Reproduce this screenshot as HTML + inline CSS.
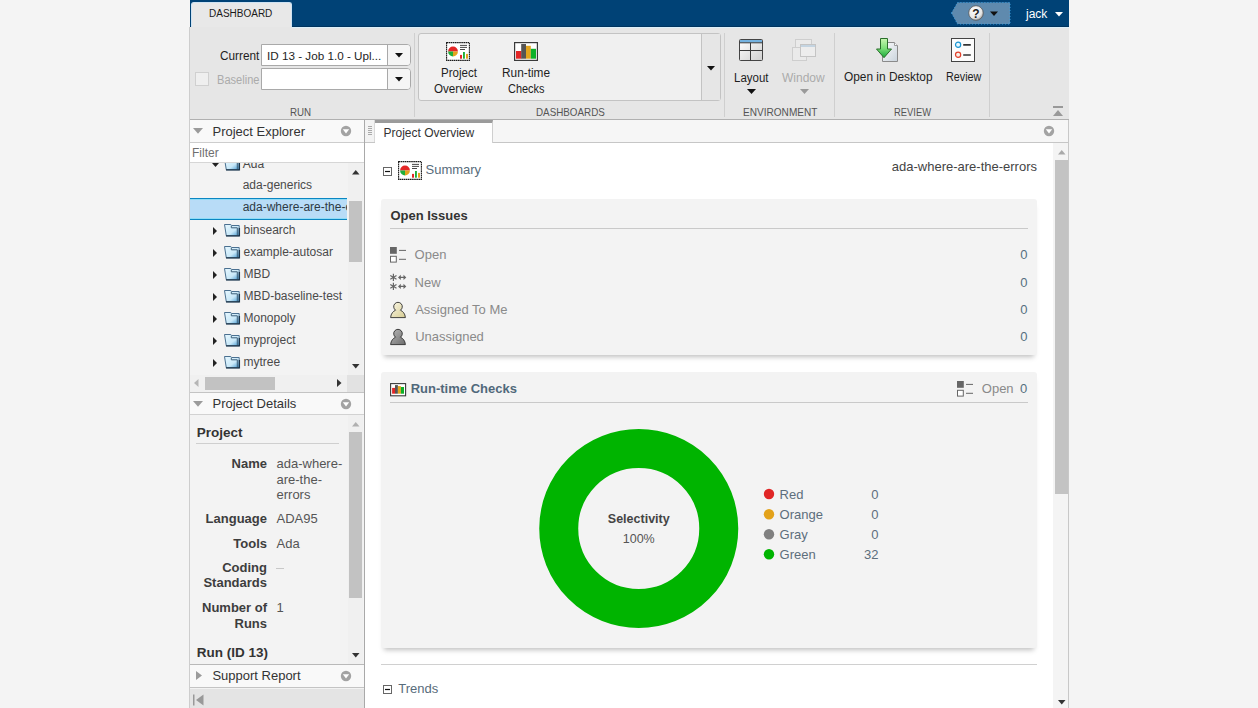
<!DOCTYPE html>
<html><head><meta charset="utf-8">
<style>
*{margin:0;padding:0;box-sizing:border-box}
html,body{width:1258px;height:708px;overflow:hidden;background:#f4f4f4;font-family:"Liberation Sans",sans-serif;position:relative}
.a{position:absolute}
.t{position:absolute;white-space:nowrap;line-height:1}
svg{position:absolute;overflow:visible}
</style></head><body>

<!-- ===== top bar ===== -->
<div class="a" style="left:190px;top:0;width:879px;height:27px;background:#004276;border-bottom:1px solid #00345f"></div>
<div class="a" style="left:191px;top:2px;width:101px;height:26px;background:#e8e8e8;border:1px solid #cfe3f3;border-bottom:none;border-radius:3px 3px 0 0"></div>
<div class="t" style="left:209px;top:8.5px;font-size:10px;color:#1a1a1a">DASHBOARD</div>

<!-- help badge -->
<svg style="left:950px;top:2px" width="62" height="23"><path d="M1.5 11 L7.5 0.5 H60 V22 H7.5 Z" fill="#5f8aae" stroke="#3fa0e0" stroke-width="1" stroke-dasharray="1 2"/>
<defs><radialGradient id="hg" cx="0.4" cy="0.35" r="0.7"><stop offset="0" stop-color="#fff"/><stop offset="0.7" stop-color="#e6e6e6"/><stop offset="1" stop-color="#9a9a9a"/></radialGradient></defs>
<circle cx="26" cy="11" r="7.3" fill="url(#hg)" stroke="#555" stroke-width="0.8"/>
<text x="26" y="15.5" text-anchor="middle" font-family="Liberation Sans" font-weight="bold" font-size="12" fill="#222">?</text>
<path d="M40 9.5 h8 l-4 4.5 z" fill="#111"/></svg>
<div class="t" style="left:1026px;top:8px;font-size:12px;color:#fff">jack</div>
<svg style="left:1055px;top:12px" width="9" height="6"><path d="M0 0 h8 l-4 4.5 z" fill="#fff"/></svg>

<!-- ===== toolstrip ===== -->
<div class="a" style="left:190px;top:27px;width:879px;height:93px;background:#e6e6e6;border-bottom:1px solid #b0b0b0"></div>
<div class="a" style="left:292px;top:27px;width:777px;height:1px;background:#dcf0fb"></div>

<!-- RUN section -->
<div class="t" style="left:219.7px;top:49.8px;font-size:12px;color:#1e1e1e;transform:scaleX(0.983);transform-origin:0 0">Current</div>
<div class="a" style="left:261px;top:44px;width:150px;height:22px;background:#fff;border:1px solid #a9a9a9;border-radius:0 4px 4px 0"></div>
<div class="a" style="left:387px;top:45px;width:23px;height:20px;background:#f5f5f5;border-left:1px solid #a9a9a9;border-radius:0 3px 3px 0"></div>
<div class="t" style="left:267px;top:50px;font-size:11.7px;color:#1e1e1e">ID 13 - Job 1.0 - Upl...</div>
<svg style="left:395px;top:53px" width="10" height="6"><path d="M0 0 h8 l-4 4.5 z" fill="#111"/></svg>
<div class="a" style="left:195px;top:72px;width:14px;height:14px;background:#efefef;border:1px solid #d0d0d0"></div>
<div class="t" style="left:216.6px;top:74px;font-size:12px;color:#ababab;transform:scaleX(0.922);transform-origin:0 0">Baseline</div>
<div class="a" style="left:261px;top:68px;width:150px;height:22px;background:#fff;border:1px solid #a9a9a9;border-radius:0 4px 4px 0"></div>
<div class="a" style="left:387px;top:69px;width:23px;height:20px;background:#f5f5f5;border-left:1px solid #a9a9a9;border-radius:0 3px 3px 0"></div>
<svg style="left:395px;top:77px" width="10" height="6"><path d="M0 0 h8 l-4 4.5 z" fill="#111"/></svg>
<div class="t" style="left:290.4px;top:107.3px;font-size:10.5px;color:#555;transform:scaleX(0.930);transform-origin:0 0">RUN</div>
<div class="a" style="left:414px;top:33px;width:1px;height:84px;background:#cfcfcf"></div>

<!-- DASHBOARDS section -->
<div class="a" style="left:418px;top:33px;width:303px;height:68px;background:#f0f0f0;border:1px solid #c3c3c3;border-radius:3px"></div>
<div class="a" style="left:701px;top:34px;width:19px;height:66px;background:#e6e6e6;border-left:1px solid #c3c3c3"></div>
<svg style="left:707px;top:65.5px" width="10" height="6"><path d="M0 0 h8 l-4 4.5 z" fill="#111"/></svg>
<!-- project overview icon -->
<svg id="ico-po" style="left:446px;top:42px" width="24" height="19">
<rect x="0.6" y="0.6" width="22.8" height="17.8" fill="#fff" stroke="#1a1a1a" stroke-width="1.1" stroke-dasharray="1.6 0.5"/>
<path d="M2.1 9.5 A4.9 4.9 0 0 1 11.9 9.5 Z" fill="#e32626"/>
<path d="M2.1 9.5 A4.9 4.9 0 0 0 7 14.4 V9.5 Z" fill="#1fae3a"/>
<path d="M7 14.4 A4.9 4.9 0 0 0 11.9 9.5 H7 Z" fill="#e2a51e"/>
<path d="M14 3.4h7M14 5.4h7M14 7.5h5" stroke="#333" stroke-width="0.9"/>
<rect x="14" y="12.9" width="2" height="3.8" fill="#e32626"/><rect x="17" y="10" width="1.9" height="6.7" fill="#1fae3a"/><rect x="20" y="11.9" width="2" height="4.8" fill="#e2a51e"/>
</svg>
<div class="t" style="left:440.5px;top:67.3px;font-size:12px;color:#1e1e1e;transform:scaleX(0.960);transform-origin:0 0">Project</div>
<div class="t" style="left:434px;top:83px;font-size:12px;color:#1e1e1e;transform:scaleX(0.968);transform-origin:0 0">Overview</div>
<!-- run-time checks icon -->
<svg style="left:514px;top:42px" width="24" height="19">
<rect x="0.6" y="0.6" width="22.8" height="17.8" fill="#fff" stroke="#3a3a3a" stroke-width="1.2"/>
<rect x="2" y="9" width="5.5" height="7.7" fill="#e32626"/>
<rect x="7.2" y="2" width="4.8" height="14.7" fill="#555"/>
<rect x="12" y="3.8" width="4.8" height="12.9" fill="#e2a51e"/>
<rect x="16.8" y="6.8" width="5.2" height="9.9" fill="#0cb12a"/>
</svg>
<div class="t" style="left:502px;top:67.3px;font-size:12px;color:#1e1e1e;transform:scaleX(0.986);transform-origin:0 0">Run-time</div>
<div class="t" style="left:508.3px;top:83px;font-size:12px;color:#1e1e1e;transform:scaleX(0.912);transform-origin:0 0">Checks</div>
<div class="t" style="left:535.5px;top:107.3px;font-size:10.5px;color:#555;transform:scaleX(0.936);transform-origin:0 0">DASHBOARDS</div>
<div class="a" style="left:724px;top:33px;width:1px;height:84px;background:#cfcfcf"></div>

<!-- ENVIRONMENT section -->
<svg style="left:739px;top:39px" width="24" height="22">
<defs><linearGradient id="lg" x1="0" y1="0" x2="1" y2="1"><stop offset="0" stop-color="#fff"/><stop offset="1" stop-color="#d0d0d0"/></linearGradient></defs>
<rect x="0.5" y="0.5" width="23" height="21" rx="1" fill="url(#lg)" stroke="#444"/>
<rect x="1" y="1" width="22" height="2.6" fill="#74b2e0"/>
<path d="M0.5 3.8h23M11.5 3.8v17.7M0.5 11.5h23" stroke="#3a3a3a" stroke-width="1"/>
</svg>
<div class="t" style="left:734px;top:71.6px;font-size:12px;color:#1e1e1e;transform:scaleX(0.958);transform-origin:0 0">Layout</div>
<svg style="left:747px;top:89px" width="10" height="6"><path d="M0 0 h9 l-4.5 5 z" fill="#111"/></svg>
<svg style="left:792px;top:38px" width="25" height="24" opacity="0.55">
<rect x="3.5" y="1.5" width="16" height="12" fill="#eee" stroke="#bbb"/>
<rect x="0.5" y="9.5" width="14" height="13" fill="#eee" stroke="#bbb"/>
<rect x="8.5" y="6.5" width="15" height="12" fill="#f4f4f4" stroke="#aaa"/>
<rect x="9" y="7" width="14" height="2" fill="#a9c6de"/>
</svg>
<div class="t" style="left:782px;top:71.6px;font-size:12px;color:#ababab">Window</div>
<svg style="left:800px;top:89px" width="10" height="6"><path d="M0 0 h9 l-4.5 5 z" fill="#9a9a9a"/></svg>
<div class="t" style="left:742.6px;top:107.3px;font-size:10.5px;color:#555;transform:scaleX(0.959);transform-origin:0 0">ENVIRONMENT</div>
<div class="a" style="left:834px;top:33px;width:1px;height:84px;background:#cfcfcf"></div>

<!-- REVIEW section -->
<svg style="left:876px;top:37px" width="24" height="26">
<defs><linearGradient id="dg" x1="0" y1="0" x2="1" y2="1"><stop offset="0" stop-color="#fdfdfd"/><stop offset="1" stop-color="#c9d3dc"/></linearGradient>
<linearGradient id="ag" x1="0" y1="0" x2="0" y2="1"><stop offset="0" stop-color="#c8f5b0"/><stop offset="0.5" stop-color="#7ee07a"/><stop offset="1" stop-color="#16a83a"/></linearGradient></defs>
<path d="M6.5 5.5 H18.5 L21.5 8.5 V24.5 H6.5 Z" fill="url(#dg)" stroke="#8a8a8a"/>
<path d="M18.5 5.5 V8.5 H21.5" fill="#fff" stroke="#9a9a9a"/>
<path d="M4.5 1.5 H11.5 V12 H15.5 L8 20.7 L0.5 12 H4.5 Z" fill="url(#ag)" stroke="#2a6e2a" stroke-width="1"/>
</svg>
<div class="t" style="left:844px;top:71.3px;font-size:12px;color:#1e1e1e;transform:scaleX(0.990);transform-origin:0 0">Open in Desktop</div>
<svg style="left:951px;top:38px" width="24" height="24">
<rect x="0.5" y="0.5" width="23" height="23" fill="#fcfcfc" stroke="#444"/>
<circle cx="7.1" cy="6.8" r="2.6" fill="#e8f8ff" stroke="#1b95d2" stroke-width="1.2"/>
<circle cx="7.1" cy="16.8" r="2.6" fill="#f8f0ea" stroke="#e2402a" stroke-width="1.2"/>
<path d="M12.2 6.9h7.6M12.2 17h7.6" stroke="#333" stroke-width="1.7"/>
</svg>
<div class="t" style="left:945.6px;top:71.3px;font-size:12px;color:#1e1e1e;transform:scaleX(0.898);transform-origin:0 0">Review</div>
<div class="t" style="left:894px;top:107.3px;font-size:10.5px;color:#555;transform:scaleX(0.894);transform-origin:0 0">REVIEW</div>
<div class="a" style="left:989px;top:33px;width:1px;height:84px;background:#cfcfcf"></div>
<svg style="left:1053px;top:106px" width="11" height="10"><rect x="0" y="0" width="10" height="2" fill="#999"/><path d="M0 10 L5 4 L10 10 Z" fill="#999"/></svg>

<svg width="0" height="0" style="position:absolute"><defs>
<linearGradient id="fg" x1="0" y1="0" x2="1" y2="1"><stop offset="0" stop-color="#e8f8ff"/><stop offset="0.6" stop-color="#c9e8f8"/><stop offset="1" stop-color="#3d95d0"/></linearGradient>
<symbol id="folder" viewBox="0 0 17 14"><path d="M0.5 1.5 H6.8 L7.8 2.5 H15.2 V12.8 H2.3 Z" fill="url(#fg)" stroke="#4a7090" stroke-width="1"/><path d="M7.3 2.5 V4.8 H13.3 V12.5" fill="none" stroke="#3d5f78" stroke-width="1"/><path d="M2 12.9 H15.4 V5" fill="none" stroke="#1b3347" stroke-width="1.3"/></symbol>
</defs></svg>

<!-- ===== MAIN CONTENT ===== -->
<div class="a" style="left:365px;top:120px;width:704px;height:588px;background:#fff;border-right:1px solid #c8c8c8"></div>
<!-- tab strip -->
<div class="a" style="left:365px;top:120px;width:703px;height:23px;background:#f6f6f6;border-bottom:1px solid #c6c6c6"></div>
<div class="a" style="left:365px;top:120px;width:10px;height:22px;background:#f3f3f3;border-right:1px solid #d9d9d9"></div>
<svg style="left:368px;top:126px" width="5" height="10"><path d="M0 0.5h4M0 2.5h4M0 4.5h4M0 6.5h4M0 8.5h4" stroke="#aaa" stroke-width="1"/></svg>
<div class="a" style="left:375px;top:120px;width:118px;height:23px;background:#fff;border-top:3px solid #9b9b9b;border-right:1px solid #cfcfcf"></div>
<div class="t" style="left:383.5px;top:127.3px;font-size:12px;color:#333">Project Overview</div>
<svg style="left:1043px;top:125px" width="12" height="12"><circle cx="6" cy="6" r="5.2" fill="#a3a3a3"/><path d="M2.8 4.3 h6.4 l-3.2 4.2 z" fill="#fff"/></svg>
<!-- right scrollbar -->
<div class="a" style="left:1053px;top:143px;width:15px;height:565px;background:#f4f4f4"></div>
<svg style="left:1058px;top:150px" width="8" height="5"><path d="M0 4.5 h7.5 l-3.75 -4.5 z" fill="#a9a9a9"/></svg>
<div class="a" style="left:1055px;top:160px;width:13px;height:334px;background:#c3c3c3"></div>
<svg style="left:1058px;top:700px" width="8" height="5"><path d="M0 0 h7.5 l-3.75 4.5 z" fill="#333"/></svg>

<!-- Summary -->
<svg style="left:383px;top:167px" width="10" height="10"><rect x="0.5" y="0.5" width="8" height="8" fill="#fff" stroke="#666"/><path d="M2 4.5h5" stroke="#111" stroke-width="1.2"/></svg>
<svg style="left:398px;top:161px" width="25" height="19">
<rect x="0.6" y="0.6" width="22.8" height="17.8" fill="#fff" stroke="#1a1a1a" stroke-width="1.1" stroke-dasharray="1.6 0.5"/>
<path d="M2.1 9.5 A4.9 4.9 0 0 1 11.9 9.5 Z" fill="#e32626"/>
<path d="M2.1 9.5 A4.9 4.9 0 0 0 7 14.4 V9.5 Z" fill="#1fae3a"/>
<path d="M7 14.4 A4.9 4.9 0 0 0 11.9 9.5 H7 Z" fill="#e2a51e"/>
<path d="M14 3.4h7M14 5.4h7M14 7.5h5" stroke="#333" stroke-width="0.9"/>
<rect x="14" y="12.9" width="2" height="3.8" fill="#e32626"/><rect x="17" y="10" width="1.9" height="6.7" fill="#1fae3a"/><rect x="20" y="11.9" width="2" height="4.8" fill="#e2a51e"/>
</svg>
<div class="t" style="left:425.5px;top:162.7px;font-size:13px;color:#586c7b">Summary</div>
<div class="t" style="right:221px;top:160.1px;font-size:13px;color:#444">ada-where-are-the-errors</div>

<!-- Open Issues card -->
<div class="a" style="left:381px;top:199px;width:656px;height:156px;background:#f3f3f3;border-radius:3px;box-shadow:0 5px 5px -3px rgba(0,0,0,0.25)"></div>
<div class="t" style="left:390.4px;top:208.8px;font-size:13px;font-weight:bold;color:#333">Open Issues</div>
<div class="a" style="left:390px;top:228px;width:638px;height:1px;background:#c9c9c9"></div>
<svg style="left:390px;top:247px" width="17" height="17"><rect x="0" y="0" width="6.8" height="6.8" fill="#666"/><rect x="0.5" y="9.3" width="5.8" height="5.8" fill="#fff" stroke="#666" stroke-width="1"/><path d="M9 3.4h7M9 12.3h7" stroke="#666" stroke-width="1"/></svg>
<div class="t" style="left:414.6px;top:247.7px;font-size:13px;color:#8a8a8a">Open</div>
<div class="t" style="right:230.5px;top:247.7px;font-size:13px;color:#55707f">0</div>
<svg style="left:390px;top:273px" width="17" height="18">
<g stroke="#666" stroke-width="1.2" fill="none"><path d="M3.4 0.8v7.2M0.3 2.6l6.2 3.6M0.3 6.2l6.2-3.6"/><path d="M3.4 9.8v7.2M0.3 11.6l6.2 3.6M0.3 15.2l6.2-3.6"/>
<path d="M10 4.4h5M10 13.4h5"/></g><path d="M8 4.4l2.8-2.6v5.2zM16.3 4.4l-2.8-2.6v5.2zM8 13.4l2.8-2.6v5.2zM16.3 13.4l-2.8-2.6v5.2z" fill="#666"/></svg>
<div class="t" style="left:414.6px;top:275.9px;font-size:13px;color:#8a8a8a">New</div>
<div class="t" style="right:230.5px;top:275.9px;font-size:13px;color:#55707f">0</div>
<svg style="left:390px;top:301px" width="17" height="18"><defs><linearGradient id="py" x1="0" y1="0" x2="1" y2="1"><stop offset="0" stop-color="#fbf8e8"/><stop offset="1" stop-color="#d6cc92"/></linearGradient></defs>
<path d="M0.6 16.6 C0.9 12.6 3.2 10.2 5.6 9.2 A4.3 4.3 0 1 1 10.4 9.2 C12.8 10.2 15.1 12.6 15.4 16.6 Z" fill="url(#py)" stroke="#2e2e2e" stroke-width="0.9"/></svg>
<div class="t" style="left:415.2px;top:302.6px;font-size:13px;color:#8a8a8a">Assigned To Me</div>
<div class="t" style="right:230.5px;top:302.6px;font-size:13px;color:#55707f">0</div>
<svg style="left:390px;top:328px" width="17" height="18"><defs><linearGradient id="pg" x1="0" y1="0" x2="1" y2="1"><stop offset="0" stop-color="#b8b8b8"/><stop offset="1" stop-color="#6d6d6d"/></linearGradient></defs>
<path d="M0.6 16.6 C0.9 12.6 3.2 10.2 5.6 9.2 A4.3 4.3 0 1 1 10.4 9.2 C12.8 10.2 15.1 12.6 15.4 16.6 Z" fill="url(#pg)" stroke="#2e2e2e" stroke-width="0.9"/></svg>
<div class="t" style="left:415.2px;top:330.3px;font-size:13px;color:#8a8a8a">Unassigned</div>
<div class="t" style="right:230.5px;top:330.3px;font-size:13px;color:#55707f">0</div>

<!-- Run-time checks card -->
<div class="a" style="left:381px;top:372px;width:656px;height:276px;background:#f3f3f3;border-radius:3px;box-shadow:0 5px 5px -3px rgba(0,0,0,0.25)"></div>
<svg style="left:390px;top:383px" width="17" height="14">
<rect x="0.6" y="0.6" width="15" height="12.2" fill="#fff" stroke="#3a3a3a" stroke-width="1.1"/>
<rect x="2.1" y="4.9" width="2.9" height="5.8" fill="#e32626"/><rect x="5" y="2.1" width="2.9" height="8.6" fill="#555"/><rect x="7.9" y="3.1" width="3" height="7.6" fill="#e2a51e"/><rect x="10.9" y="4" width="3.1" height="6.7" fill="#0cb12a"/>
</svg>
<div class="t" style="left:410.7px;top:381.8px;font-size:13px;font-weight:bold;color:#50687a">Run-time Checks</div>
<svg style="left:957px;top:381px" width="17" height="17"><rect x="0" y="0" width="6.8" height="6.8" fill="#666"/><rect x="0.5" y="9.3" width="5.8" height="5.8" fill="#fff" stroke="#666" stroke-width="1"/><path d="M9 3.4h7M9 12.3h7" stroke="#666" stroke-width="1"/></svg>
<div class="t" style="left:981.8px;top:381.7px;font-size:13px;color:#8a8a8a">Open</div>
<div class="t" style="right:230.7px;top:381.7px;font-size:13px;color:#55707f">0</div>
<div class="a" style="left:390px;top:402px;width:638px;height:1px;background:#c9c9c9"></div>
<svg style="left:538px;top:428px" width="202" height="202"><circle cx="100.75" cy="100.5" r="80" fill="none" stroke="#00b400" stroke-width="39"/></svg>
<div class="t" style="left:588.75px;width:100px;text-align:center;top:512.9px;font-size:12.5px;font-weight:bold;color:#444">Selectivity</div>
<div class="t" style="left:588.75px;width:100px;text-align:center;top:532.6px;font-size:12.5px;color:#555">100%</div>
<svg style="left:763px;top:488px" width="12" height="72">
<circle cx="6" cy="6" r="5.2" fill="#e02626"/><circle cx="6" cy="26.2" r="5.2" fill="#e3a21a"/><circle cx="6" cy="46.2" r="5.2" fill="#808080"/><circle cx="6" cy="66.2" r="5.2" fill="#00b400"/></svg>
<div class="t" style="left:779.6px;top:487.6px;font-size:13px;color:#5d6e7c">Red</div>
<div class="t" style="left:779.6px;top:508px;font-size:13px;color:#5d6e7c">Orange</div>
<div class="t" style="left:779.6px;top:527.8px;font-size:13px;color:#5d6e7c">Gray</div>
<div class="t" style="left:779.6px;top:547.6px;font-size:13px;color:#5d6e7c">Green</div>
<div class="t" style="right:379.5px;top:487.6px;font-size:13px;color:#5d6e7c">0</div>
<div class="t" style="right:379.5px;top:508px;font-size:13px;color:#5d6e7c">0</div>
<div class="t" style="right:379.5px;top:527.8px;font-size:13px;color:#5d6e7c">0</div>
<div class="t" style="right:379.5px;top:547.6px;font-size:13px;color:#5d6e7c">32</div>

<div class="a" style="left:381px;top:664px;width:656px;height:1px;background:#d0d0d0"></div>
<svg style="left:383px;top:685px" width="10" height="10"><rect x="0.5" y="0.5" width="8" height="8" fill="#fff" stroke="#666"/><path d="M2 4.5h5" stroke="#111" stroke-width="1.2"/></svg>
<div class="t" style="left:398.2px;top:681.9px;font-size:13px;color:#586c7b">Trends</div>

<!-- ===== LEFT PANELS ===== -->
<div class="a" style="left:190px;top:120px;width:175px;height:588px;background:#f3f3f3;border-right:1px solid #a9a9a9"></div>
<div class="a" style="left:189px;top:27px;width:1px;height:681px;background:#cdcdcd"></div>
<!-- Project Explorer header -->
<div class="a" style="left:190px;top:120px;width:174px;height:23px;background:#f9f9f9;border-bottom:1px solid #cdcdcd"></div>
<svg style="left:193px;top:128px" width="11" height="7"><path d="M0 0 h10 l-5 5.8 z" fill="#9b9b9b"/></svg>
<div class="t" style="left:212.5px;top:124.5px;font-size:13px;color:#333">Project Explorer</div>
<svg style="left:340px;top:125px" width="12" height="12"><circle cx="6" cy="6" r="5.2" fill="#a3a3a3"/><path d="M2.8 4.3 h6.4 l-3.2 4.2 z" fill="#fff"/></svg>
<!-- filter -->
<div class="a" style="left:190px;top:143px;width:174px;height:20px;background:#fff;border-bottom:1px solid #d6d6d6"></div>
<div class="t" style="left:192px;top:147px;font-size:12px;color:#6f6f6f">Filter</div>
<!-- tree -->
<div class="a" style="left:190px;top:163px;width:174px;height:212px;overflow:hidden">
  <svg style="left:21.7px;top:0px" width="8" height="6"><path d="M0 0 h7 l-3.5 4 z" fill="#222"/></svg>
  <svg style="left:34.0px;top:-6.0px" width="17" height="14"><use href="#folder"/></svg>
  <div class="t" style="left:52.8px;top:-4.8px;font-size:12px;color:#4a4a4a">Ada</div>
  <div class="t" style="left:52.7px;top:16.2px;font-size:12px;color:#4a4a4a">ada-generics</div>
  <div class="a" style="left:0;top:35px;width:157px;height:22px;background:#b8dcf7;border-top:1px solid #0b86c2;border-bottom:1px solid #0b86c2;box-shadow:inset 0 1px 0 #8fdcf7,inset 0 -1px 0 #8fdcf7;overflow:hidden">
    <div class="t" style="left:52.7px;top:1.5px;font-size:12px;color:#2e3a44">ada-where-are-the-errors</div>
  </div>
  <svg style="left:23.0px;top:63.7px" width="5" height="9"><path d="M0 0 v8 l4 -4 z" fill="#222"/></svg>
  <svg style="left:34.0px;top:59.5px" width="17" height="14"><use href="#folder"/></svg>
  <div class="t" style="left:53.5px;top:60.7px;font-size:12px;color:#4a4a4a">binsearch</div>
  <svg style="left:23.0px;top:85.7px" width="5" height="9"><path d="M0 0 v8 l4 -4 z" fill="#222"/></svg>
  <svg style="left:34.0px;top:81.5px" width="17" height="14"><use href="#folder"/></svg>
  <div class="t" style="left:53.5px;top:82.7px;font-size:12px;color:#4a4a4a">example-autosar</div>
  <svg style="left:23.0px;top:107.7px" width="5" height="9"><path d="M0 0 v8 l4 -4 z" fill="#222"/></svg>
  <svg style="left:34.0px;top:103.5px" width="17" height="14"><use href="#folder"/></svg>
  <div class="t" style="left:53.5px;top:104.7px;font-size:12px;color:#4a4a4a">MBD</div>
  <svg style="left:23.0px;top:129.7px" width="5" height="9"><path d="M0 0 v8 l4 -4 z" fill="#222"/></svg>
  <svg style="left:34.0px;top:125.5px" width="17" height="14"><use href="#folder"/></svg>
  <div class="t" style="left:53.5px;top:126.7px;font-size:12px;color:#4a4a4a">MBD-baseline-test</div>
  <svg style="left:23.0px;top:151.7px" width="5" height="9"><path d="M0 0 v8 l4 -4 z" fill="#222"/></svg>
  <svg style="left:34.0px;top:147.5px" width="17" height="14"><use href="#folder"/></svg>
  <div class="t" style="left:53.5px;top:148.7px;font-size:12px;color:#4a4a4a">Monopoly</div>
  <svg style="left:23.0px;top:173.7px" width="5" height="9"><path d="M0 0 v8 l4 -4 z" fill="#222"/></svg>
  <svg style="left:34.0px;top:169.5px" width="17" height="14"><use href="#folder"/></svg>
  <div class="t" style="left:53.5px;top:170.7px;font-size:12px;color:#4a4a4a">myproject</div>
  <svg style="left:23.0px;top:195.7px" width="5" height="9"><path d="M0 0 v8 l4 -4 z" fill="#222"/></svg>
  <svg style="left:34.0px;top:191.5px" width="17" height="14"><use href="#folder"/></svg>
  <div class="t" style="left:53.5px;top:192.7px;font-size:12px;color:#4a4a4a">mytree</div>
  <!-- vscroll -->
  <div class="a" style="left:158.0px;top:0;width:15px;height:212px;background:#f0f0f0"></div>
  <svg style="left:162.0px;top:7px" width="8" height="5"><path d="M0 4.5 h7.5 l-3.75 -4.5 z" fill="#333"/></svg>
  <div class="a" style="left:159.0px;top:38px;width:13px;height:61px;background:#c2c2c2"></div>
  <svg style="left:162.0px;top:201px" width="8" height="5"><path d="M0 0 h7.5 l-3.75 4.5 z" fill="#333"/></svg>
</div>
<!-- hscroll -->
<div class="a" style="left:190px;top:375px;width:174px;height:18px;background:#f0f0f0;border-bottom:1px solid #c4c4c4"></div>
<div class="a" style="left:205px;top:377px;width:70px;height:13px;background:#c2c2c2"></div>
<svg style="left:194px;top:379px" width="5" height="9"><path d="M4.5 0 v8 l-4.5 -4 z" fill="#b5b5b5"/></svg>
<svg style="left:337px;top:379px" width="5" height="9"><path d="M0 0 v8 l4.5 -4 z" fill="#333"/></svg>
<div class="a" style="left:347px;top:375px;width:17px;height:17px;background:#e2e2e2"></div>
<!-- Project Details header -->
<div class="a" style="left:190px;top:393px;width:174px;height:22px;background:#f9f9f9;border-bottom:1px solid #d2d2d2"></div>
<svg style="left:193px;top:401px" width="11" height="7"><path d="M0 0 h10 l-5 5.8 z" fill="#9b9b9b"/></svg>
<div class="t" style="left:212.5px;top:397.1px;font-size:13px;color:#333">Project Details</div>
<svg style="left:340px;top:398px" width="12" height="12"><circle cx="6" cy="6" r="5.2" fill="#a3a3a3"/><path d="M2.8 4.3 h6.4 l-3.2 4.2 z" fill="#fff"/></svg>
<!-- details content -->
<div class="a" style="left:190px;top:415px;width:174px;height:249px;overflow:hidden">
  <div class="t" style="left:6.8px;top:10.8px;font-size:13.5px;font-weight:bold;color:#333">Project</div>
  <div class="a" style="left:6.0px;top:28.0px;width:143px;height:1px;background:#cfcfcf"></div>
  <div class="t" style="right:97.0px;top:42.0px;font-size:13px;font-weight:bold;color:#3d3d3d">Name</div>
  <div class="t" style="right:97.0px;top:97.0px;font-size:13px;font-weight:bold;color:#3d3d3d">Language</div>
  <div class="t" style="right:97.0px;top:121.6px;font-size:13px;font-weight:bold;color:#3d3d3d">Tools</div>
  <div class="t" style="right:97.0px;top:145.5px;font-size:13px;font-weight:bold;color:#3d3d3d">Coding</div>
  <div class="t" style="right:97.0px;top:161.3px;font-size:13px;font-weight:bold;color:#3d3d3d">Standards</div>
  <div class="t" style="right:97.0px;top:185.7px;font-size:13px;font-weight:bold;color:#3d3d3d">Number of</div>
  <div class="t" style="right:97.0px;top:201.5px;font-size:13px;font-weight:bold;color:#3d3d3d">Runs</div>
  <div class="t" style="left:86.5px;top:42.0px;font-size:13px;color:#555">ada-where-</div>
  <div class="t" style="left:86.5px;top:57.5px;font-size:13px;color:#555">are-the-</div>
  <div class="t" style="left:86.5px;top:73.0px;font-size:13px;color:#555">errors</div>
  <div class="t" style="left:86.5px;top:97.0px;font-size:13px;color:#555">ADA95</div>
  <div class="t" style="left:86.5px;top:121.6px;font-size:13px;color:#555">Ada</div>
  <div class="t" style="left:86.5px;top:185.7px;font-size:13px;color:#555">1</div>
  <div class="a" style="left:86.0px;top:152.5px;width:8px;height:1px;background:#c8c8c8"></div>
  <div class="t" style="left:6.8px;top:230.6px;font-size:13.5px;font-weight:bold;color:#333">Run (ID 13)</div>
  <div class="a" style="left:158.0px;top:0;width:15px;height:251px;background:#f0f0f0"></div>
  <svg style="left:162.0px;top:7.0px" width="8" height="5"><path d="M0 4.5 h7.5 l-3.75 -4.5 z" fill="#b0b0b0"/></svg>
  <div class="a" style="left:159.0px;top:17.0px;width:13px;height:166px;background:#c2c2c2"></div>
  <svg style="left:162.0px;top:238.0px" width="8" height="5"><path d="M0 0 h7.5 l-3.75 4.5 z" fill="#333"/></svg>
</div>
<div class="a" style="left:190px;top:664px;width:174px;height:1px;background:#b9b9b9"></div>
<!-- Support report header -->
<div class="a" style="left:190px;top:665px;width:174px;height:23px;background:#f9f9f9;border-bottom:1px solid #c4c4c4"></div>
<svg style="left:196px;top:671px" width="7" height="10"><path d="M0 0 v9 l6 -4.5 z" fill="#9b9b9b"/></svg>
<div class="t" style="left:212.4px;top:668.6px;font-size:13px;color:#333">Support Report</div>
<svg style="left:340px;top:670px" width="12" height="12"><circle cx="6" cy="6" r="5.2" fill="#a3a3a3"/><path d="M2.8 4.3 h6.4 l-3.2 4.2 z" fill="#fff"/></svg>
<div class="a" style="left:190px;top:689px;width:174px;height:19px;background:#e4e4e4"></div>
<svg style="left:193px;top:694px" width="12" height="12"><rect x="0" y="0.5" width="1.5" height="11" fill="#999"/><path d="M10.5 0.5 v11 l-7.5 -5.5 z" fill="#999"/></svg>

</body></html>
